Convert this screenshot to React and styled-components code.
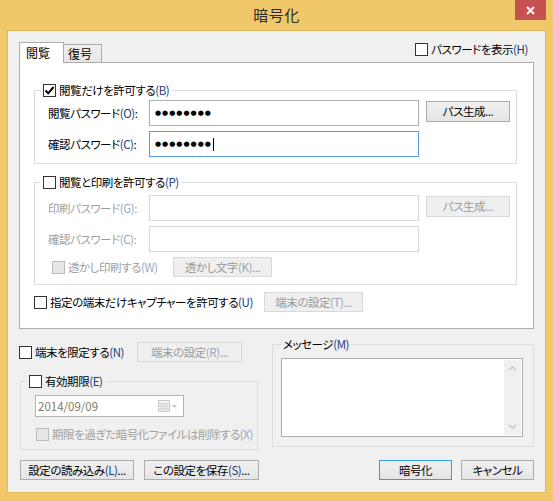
import React from "react";
import styled, { createGlobalStyle, css } from "styled-components";

const GlobalStyle = createGlobalStyle`
  html, body { margin: 0; padding: 0; background: #fff; }
  body {
    font-family: "Noto Sans CJK JP", "Noto Sans", sans-serif;
    font-size: 11.5px;
    letter-spacing: -0.45px;
    color: #000;
    font-feature-settings: "palt";
  }
  * { box-sizing: border-box; }
`;

const Window = styled.div`
  width: 553px;
  height: 501px;
  background: #f0c86a;
  display: flex;
  flex-direction: column;
`;

const TitleBar = styled.div`
  height: 31px;
  display: grid;
  grid-template-columns: 1fr auto 1fr;
  align-items: start;
`;

const Title = styled.div`
  grid-column: 2;
  font-size: 15px;
  line-height: 20px;
  padding-top: 5px;
  letter-spacing: 0.5px;
  color: #2b2b2b;
`;

const CloseButton = styled.div`
  grid-column: 3;
  justify-self: end;
  margin-right: 7px;
  width: 31px;
  height: 20px;
  background: #c75050;
  display: flex;
  align-items: center;
  justify-content: center;
`;

const Client = styled.div`
  flex: 1;
  margin: 0 8px 9px;
  background: #f0f0f0;
  padding: 11px 11px 0;
  display: flex;
  flex-direction: column;
  box-shadow: 0 0 0 1px #e0b95e;
`;

const TabStrip = styled.div`
  height: 20px;
  display: flex;
  justify-content: space-between;
  align-items: flex-end;
`;

const Tabs = styled.div`
  display: flex;
  align-items: flex-end;
`;

const Tab = styled.div`
  display: flex;
  align-items: center;
  line-height: 16px;
  font-size: 12px;
  letter-spacing: 0;
  ${(p) =>
    p.$active
      ? css`
          height: 21px;
          width: 45px;
          padding-left: 6px;
          background: #fff;
          border: 1px solid #adadad;
          border-bottom: none;
          margin-bottom: -1px;
          position: relative;
          z-index: 1;
        `
      : css`
          height: 18px;
          width: 38px;
          padding-left: 4px;
          background: linear-gradient(#f0f0f0, #e5e5e5);
          border: 1px solid #acacac;
          border-left: none;
          border-bottom: none;
        `}
`;

const Panel = styled.div`
  height: 267px;
  background: #fff;
  border: 1px solid #adadad;
  padding: 19px 0 0 14px;
`;

const Group = styled.fieldset`
  margin: ${(p) => p.$margin || "0"};
  width: ${(p) => p.$width}px;
  border: 1px solid #dcdcdc;
  padding: ${(p) => p.$padding};
  min-width: 0;
`;

const Legend = styled.legend`
  padding: 0 2px;
  height: 16px;
  line-height: 16px;
  display: flex;
  align-items: center;
`;

const CheckLabel = styled.label`
  display: flex;
  align-items: center;
  gap: 3px;
  line-height: 16px;
  white-space: nowrap;
  color: ${(p) => (p.$disabled ? "#a0a0a0" : "#000")};
  width: ${(p) => (p.$width ? `${p.$width}px` : "auto")};
  margin: ${(p) => p.$margin || "0"};
`;

const Box = styled.span`
  width: 13px;
  height: 13px;
  flex: none;
  border: 1px solid ${(p) => (p.$disabled ? "#bcbcbc" : "#333")};
  background: ${(p) => (p.$disabled ? "#e6e6e6" : "#fff")};
  display: flex;
  align-items: center;
  justify-content: center;
`;

const Key = styled.span`
  font-size: 11.5px;
  letter-spacing: -0.4px;
  color: ${(p) => (p.$dim ? "#9aa6bd" : "#1e3c78")};
`;

const Rows = styled.div`
  display: flex;
  flex-direction: column;
  gap: 5px;
  padding-left: ${(p) => p.$indent || 7}px;
`;

const FieldRow = styled.div`
  display: flex;
  align-items: center;
  height: ${(p) => p.$height || 26}px;
`;

const FieldLabel = styled.span`
  width: 101px;
  flex: none;
  white-space: nowrap;
  color: ${(p) => (p.$disabled ? "#a0a0a0" : "#000")};
`;

const TextBox = styled.div`
  width: 270px;
  height: 26px;
  flex: none;
  background: #fff;
  padding-left: 5px;
  display: flex;
  align-items: center;
  border: 1px solid
    ${(p) => (p.$focused ? "#569de5" : p.$disabled ? "#d9d9d9" : "#abadb3")};
`;

const Dots = styled.span`
  font-family: "DejaVu Sans", sans-serif;
  font-size: 7px;
  letter-spacing: 1px;
  line-height: 12px;
`;

const Caret = styled.span`
  width: 1px;
  height: 13px;
  background: #000;
  margin-left: 1px;
`;

const Button = styled.div`
  width: ${(p) => p.$width}px;
  height: ${(p) => p.$height || 20}px;
  flex: none;
  display: flex;
  align-items: center;
  justify-content: center;
  white-space: nowrap;
  line-height: 16px;
  margin: ${(p) => p.$margin || "0"};
  ${(p) =>
    p.$disabled
      ? css`
          border: 1px solid #d9d9d9;
          background: #efefef;
          color: #9a9a9a;
        `
      : css`
          border: 1px solid ${p.$primary ? "#3399ff" : "#acacac"};
          background: linear-gradient(#f0f0f0, #e5e5e5);
          color: #000;
        `}
`;

const CaptureRow = styled.div`
  display: flex;
  align-items: center;
  height: 20px;
  margin-top: 7px;
`;

const Lower = styled.div`
  display: grid;
  grid-template-columns: 240px 262px;
  column-gap: 13px;
  align-items: start;
`;

const LeftColumn = styled.div`
  display: flex;
  flex-direction: column;
  padding-top: 13px;
`;

const RightColumn = styled.div`
  padding-top: 7px;
`;

const LimitRow = styled.div`
  display: flex;
  align-items: center;
  height: 20px;
`;

const DatePicker = styled.div`
  width: 149px;
  height: 22px;
  margin-left: 8px;
  border: 1px solid #b4b4b4;
  background: #fff;
  display: flex;
  align-items: center;
  padding: 0 5px 0 2px;
  color: #86786a;
  letter-spacing: 0;
`;

const DateText = styled.span`
  flex: 1;
`;

const MessageBox = styled.div`
  width: 242px;
  height: 79px;
  border: 1px solid #abadb3;
  background: #fff;
  display: flex;
  justify-content: flex-end;
  padding: 1px;
`;

const ScrollBar = styled.div`
  width: 17px;
  background: #f0f0f0;
  display: flex;
  flex-direction: column;
  justify-content: space-between;
  align-items: center;
  padding: 6px 0;
`;

const ButtonRow = styled.div`
  display: flex;
  justify-content: space-between;
  margin-top: 10px;
`;

const ButtonGroup = styled.div`
  display: flex;
  gap: ${(p) => p.$gap}px;
  margin-left: ${(p) => p.$left || 0}px;
`;

const Check = ({ checked, disabled }) => (
  <Box $disabled={disabled}>
    {checked && (
      <svg width="11" height="11" viewBox="0 0 11 11">
        <path d="M1.5 5.5 L4.2 8.3 L9.6 2" fill="none" stroke="#000" strokeWidth="2" />
      </svg>
    )}
  </Box>
);

const Option = ({ children, checked, disabled, ...rest }) => (
  <CheckLabel $disabled={disabled} {...rest}>
    <Check checked={checked} disabled={disabled} />
    <span>{children}</span>
  </CheckLabel>
);

const Chevron = ({ down }) => (
  <svg width="9" height="5" viewBox="0 0 9 5">
    <path
      d={down ? "M1 1 L4.5 4 L8 1" : "M1 4 L4.5 1 L8 4"}
      fill="none"
      stroke="#c4c4c4"
      strokeWidth="1.5"
    />
  </svg>
);

export default function App() {
  return (
    <>
      <GlobalStyle />
      <Window>
        <TitleBar>
          <Title>暗号化</Title>
          <CloseButton>
            <svg width="9" height="9" viewBox="0 0 9 9">
              <path d="M1 1 L8 8 M8 1 L1 8" stroke="#fff" strokeWidth="2" />
            </svg>
          </CloseButton>
        </TitleBar>
        <Client>
          <TabStrip>
            <Tabs>
              <Tab $active>閲覧</Tab>
              <Tab>復号</Tab>
            </Tabs>
            <Option $margin="0 6px 5px 0">
              パスワードを表示<Key>(H)</Key>
            </Option>
          </TabStrip>
          <Panel>
            <Group $width={483} $padding="2px 0 6px 6px">
              <Legend>
                <Option checked>
                  閲覧だけを許可する<Key>(B)</Key>
                </Option>
              </Legend>
              <Rows>
                <FieldRow>
                  <FieldLabel>
                    閲覧パスワード<Key>(O)</Key>:
                  </FieldLabel>
                  <TextBox>
                    <Dots>●●●●●●●●</Dots>
                  </TextBox>
                  <Button $width={84} $height={21} $margin="-4px 0 0 7px">
                    パス生成...
                  </Button>
                </FieldRow>
                <FieldRow>
                  <FieldLabel>
                    確認パスワード<Key>(C)</Key>:
                  </FieldLabel>
                  <TextBox $focused>
                    <Dots>●●●●●●●●</Dots>
                    <Caret />
                  </TextBox>
                </FieldRow>
              </Rows>
            </Group>

            <Group $width={483} $padding="5px 0 7px 6px" $margin="10px 0 0">
              <Legend>
                <Option>
                  閲覧と印刷を許可する<Key>(P)</Key>
                </Option>
              </Legend>
              <Rows>
                <FieldRow>
                  <FieldLabel $disabled>
                    印刷パスワード<Key $dim>(G)</Key>:
                  </FieldLabel>
                  <TextBox $disabled />
                  <Button $disabled $width={84} $height={21} $margin="-4px 0 0 7px">
                    パス生成...
                  </Button>
                </FieldRow>
                <FieldRow>
                  <FieldLabel $disabled>
                    確認パスワード<Key $dim>(C)</Key>:
                  </FieldLabel>
                  <TextBox $disabled />
                </FieldRow>
                <FieldRow $height={20}>
                  <Option disabled $width={121} $margin="0 0 0 4px">
                    透かし印刷する<Key $dim>(W)</Key>
                  </Option>
                  <Button $disabled $width={99}>
                    透かし文字<Key $dim>(K)</Key>...
                  </Button>
                </FieldRow>
              </Rows>
            </Group>

            <CaptureRow>
              <Option $width={230}>
                指定の端末だけキャプチャーを許可する<Key>(U)</Key>
              </Option>
              <Button $disabled $width={99}>
                端末の設定<Key $dim>(T)</Key>...
              </Button>
            </CaptureRow>
          </Panel>

          <Lower>
            <LeftColumn>
              <LimitRow>
                <Option $width={118}>
                  端末を限定する<Key>(N)</Key>
                </Option>
                <Button $disabled $width={105}>
                  端末の設定<Key $dim>(R)</Key>...
                </Button>
              </LimitRow>
              <Group $width={238} $padding="6px 0 7px 6px" $margin="11px 0 0 1px">
                <Legend>
                  <Option>
                    有効期限<Key>(E)</Key>
                  </Option>
                </Legend>
                <DatePicker>
                  <DateText>2014/09/09</DateText>
                  <svg width="20" height="12" viewBox="0 0 20 12">
                    <rect x="0.5" y="0.5" width="11" height="11" fill="#f4f4f4" stroke="#c8c8c8" />
                    <path
                      d="M0.5 3.5 H11.5 M0.5 6 H11.5 M0.5 8.7 H11.5 M3.2 3.5 V11.5 M6 3.5 V11.5 M8.8 3.5 V11.5"
                      stroke="#d4d4d4"
                      strokeWidth="1"
                    />
                    <path d="M14 5 L19 5 L16.5 8 Z" fill="#c4c4c4" />
                  </svg>
                </DatePicker>
                <Option disabled $margin="9px 0 0 9px">
                  期限を過ぎた暗号化ファイルは削除する<Key $dim>(X)</Key>
                </Option>
              </Group>
            </LeftColumn>
            <RightColumn>
              <Group $width={262} $padding="6px 0 9px 8px">
                <Legend>
                  メッセージ<Key>(M)</Key>
                </Legend>
                <MessageBox>
                  <ScrollBar>
                    <Chevron />
                    <Chevron down />
                  </ScrollBar>
                </MessageBox>
              </Group>
            </RightColumn>
          </Lower>

          <ButtonRow>
            <ButtonGroup $gap={10} $left={1}>
              <Button $width={114}>
                設定の読み込み<Key>(L)</Key>...
              </Button>
              <Button $width={115}>
                この設定を保存<Key>(S)</Key>...
              </Button>
            </ButtonGroup>
            <ButtonGroup $gap={9}>
              <Button $primary $width={73}>
                暗号化
              </Button>
              <Button $width={73}>キャンセル</Button>
            </ButtonGroup>
          </ButtonRow>
        </Client>
      </Window>
    </>
  );
}
